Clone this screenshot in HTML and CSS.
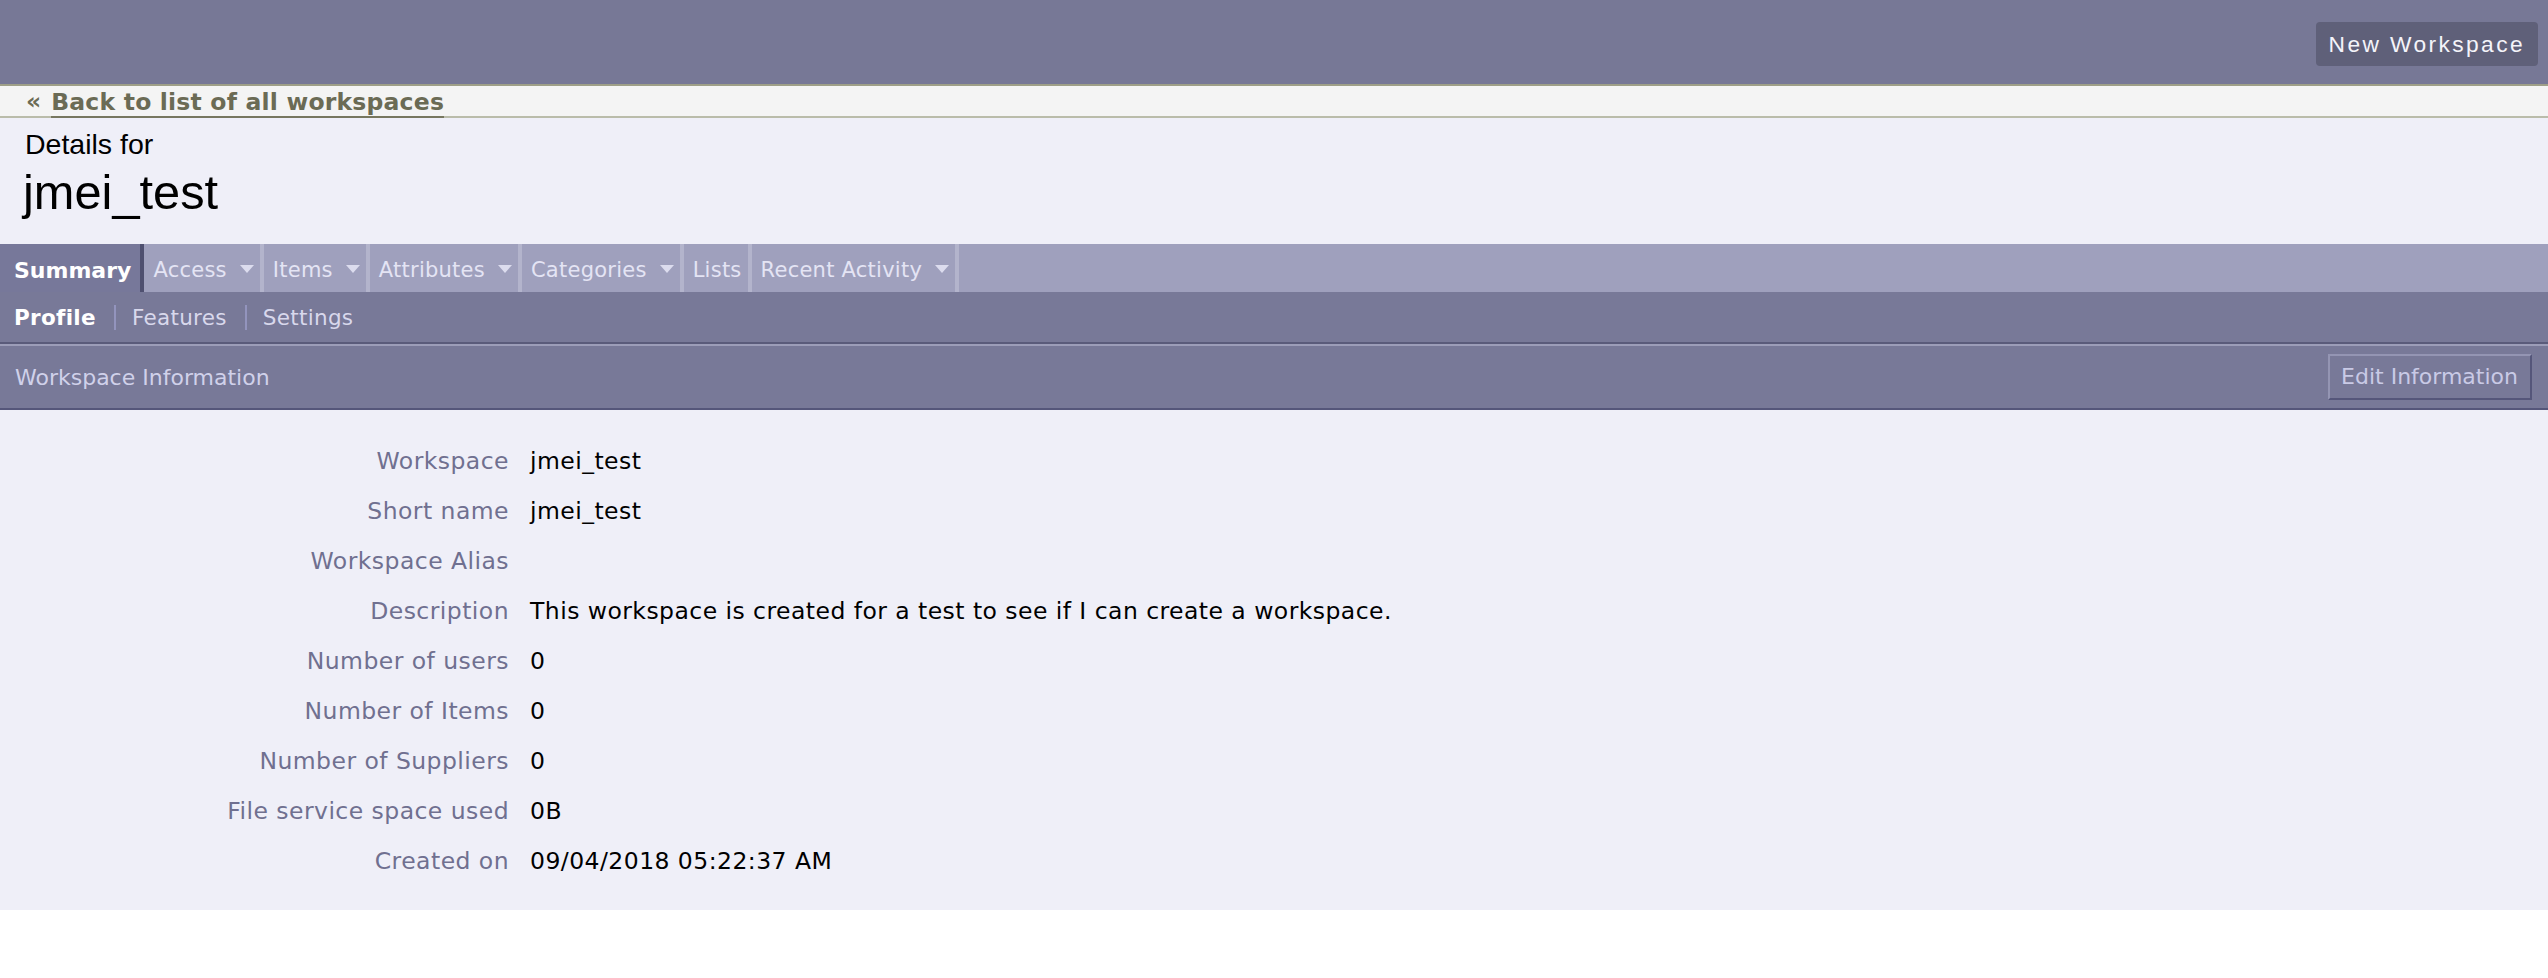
FILE: index.html
```html
<!DOCTYPE html>
<html>
<head>
<meta charset="utf-8">
<link rel="stylesheet" href="styles.css">
</head>

<body>
  <div id="topbar">
    <div class="btn_new">New Workspace</div>
  </div>

  <div id="back">
    <span class="laquo">&laquo;</span>
    <a href="#">Back to list of all workspaces</a>
  </div>

  <div id="title">
    <div class="details_for">Details for</div>
    <h1>jmei_test</h1>
  </div>

  <div id="tabs">
    <div class="tab current">Summary</div>
    <div class="tab">Access<i class="arrow"></i></div>
    <div class="tab">Items<i class="arrow"></i></div>
    <div class="tab">Attributes<i class="arrow"></i></div>
    <div class="tab">Categories<i class="arrow"></i></div>
    <div class="tab">Lists</div>
    <div class="tab">Recent Activity<i class="arrow"></i></div>
  </div>

  <div id="subnav">
    <a class="current">Profile</a>
    <a>Features</a>
    <a>Settings</a>
  </div>

  <div id="section_head">
    <span>Workspace Information</span>
    <div class="btn_edit">Edit Information</div>
  </div>

  <div id="info">
    <div class="label">Workspace</div><div class="value">jmei_test</div>
    <div class="label">Short name</div><div class="value">jmei_test</div>
    <div class="label">Workspace Alias</div><div class="value"></div>
    <div class="label">Description</div><div class="value">This workspace is created for a test to see if I can create a workspace.</div>
    <div class="label">Number of users</div><div class="value">0</div>
    <div class="label">Number of Items</div><div class="value">0</div>
    <div class="label">Number of Suppliers</div><div class="value">0</div>
    <div class="label">File service space used</div><div class="value">0B</div>
    <div class="label">Created on</div><div class="value">09/04/2018 05:22:37 AM</div>
  </div>
</body>
</html>
```

FILE: styles.css
```css
html, body {
  margin: 0;
  padding: 0;
  background-color: white;
  color: #000;
  font-family: "DejaVu Sans", Verdana, sans-serif;
}

#topbar {
  height: 84px;
  background-color: #777896;
  display: flex;
  justify-content: flex-end;
  align-items: flex-start;
  padding-right: 10px;
}

.btn_new {
  margin-top: 22px;
  height: 44px;
  line-height: 44px;
  padding: 0 13px;
  background-color: #5f6079;
  border-radius: 4px;
  color: #f4f4fa;
  font-family: "Liberation Sans", Arial, sans-serif;
  font-size: 22.75px;
  letter-spacing: 2.4px;
}

#back {
  display: flex;
  align-items: flex-end;
  height: 30px;
  padding-left: 26px;
  background-color: #f4f4f4;
  border-top: 2px solid #9e9f88;
  border-bottom: 2px solid #babcaa;
  font-weight: bold;
  font-size: 23.5px;
  color: #6b6b55;
}

#back .laquo {
  line-height: 30px;
  margin-right: 10px;
}

#back a {
  color: #6b6b55;
  text-decoration: none;
  line-height: 28px;
  letter-spacing: 0.2px;
  border-bottom: 2px solid #77775f;
  margin-bottom: -2px;
}

#title {
  background-color: #efeff8;
  padding: 10px 0 24px 25px;
  font-family: "Liberation Sans", Arial, sans-serif;
}

.details_for {
  font-size: 28.5px;
  line-height: 32px;
}

#title h1 {
  margin: 4px 0 0 -2px;
  font-size: 48.75px;
  line-height: 56px;
  font-weight: normal;
}

#tabs {
  display: flex;
  height: 48px;
  background-color: #9fa0bd;
  font-size: 21px;
  letter-spacing: 0.25px;
  color: #e4e4f4;
}

.tab {
  display: flex;
  align-items: center;
  padding: 4px 6px 0 9px;
  border-right: 4px solid #b3b4cc;
}

.tab.current {
  padding: 4px 9px 0 14px;
  background-color: #77789a;
  border-right-color: #4f5070;
  color: white;
  font-weight: bold;
  font-size: 22px;
  letter-spacing: 0;
}

.arrow {
  width: 0;
  height: 0;
  margin-left: 13px;
  margin-bottom: 2px;
  border-left: 7px solid transparent;
  border-right: 7px solid transparent;
  border-top: 8px solid #dcdcee;
}

#subnav {
  display: flex;
  align-items: center;
  height: 50px;
  background-color: #787998;
  border-bottom: 2px solid #5a5b7a;
  padding-left: 14px;
  font-size: 21.5px;
  letter-spacing: 0.3px;
  color: #d8d8ec;
}

#subnav a {
  line-height: 25px;
  padding: 0 18px 0 16px;
  border-left: 2px solid #9394bd;
}

#subnav a.current {
  padding-left: 0;
  border-left: none;
  color: white;
  font-weight: bold;
}

#section_head {
  display: flex;
  justify-content: space-between;
  align-items: center;
  height: 62px;
  padding: 0 16px 0 15px;
  background-color: #787998;
  border-top: 2px solid #9c9db8;
  border-bottom: 2px solid #55567a;
  font-size: 22px;
  color: #d0d1ea;
}

.btn_edit {
  height: 42px;
  line-height: 42px;
  padding: 0 12px 0 11px;
  border: 2px solid;
  border-color: #9495b3 #55567a #55567a #9495b3;
  color: #c9cae6;
}

#info {
  display: grid;
  grid-template-columns: 509px 1fr;
  column-gap: 21px;
  padding: 26px 0 24px 0;
  background-color: #efeff8;
  font-size: 23.5px;
  letter-spacing: 0.45px;
  line-height: 50px;
}

#info .label {
  text-align: right;
  color: #707090;
}

#info .value {
  color: #000;
  min-height: 50px;
}
```
